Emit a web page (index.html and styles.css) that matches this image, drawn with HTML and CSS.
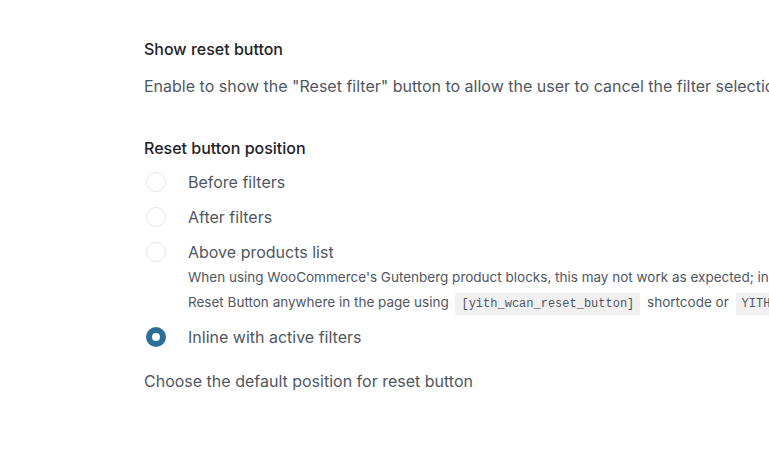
FILE: index.html
```html
<!DOCTYPE html>
<html lang="en">
<head>
  <meta charset="UTF-8" />
  <meta name="viewport" content="width=device-width, initial-scale=1.0"/>
  <title>Reset button options</title>
  <link rel="stylesheet" href="styles.css">
</head>
<body>
  <main class="options">
    <h2 class="field-title">Show reset button</h2>
    <p class="field-desc">Enable to show the "Reset filter" button to allow the user to cancel the filter selection in one click.</p>

    <h2 class="field-title second">Reset button position</h2>
    <ul class="radio-list">
      <li class="radio-row">
        <span class="radio"></span>
        <span class="radio-label">Before filters</span>
      </li>
      <li class="radio-row">
        <span class="radio"></span>
        <span class="radio-label">After filters</span>
      </li>
      <li class="radio-row has-note">
        <span class="radio"></span>
        <span class="radio-label">Above products list</span>
        <p class="radio-note">
          <span class="note-line">When using WooCommerce's Gutenberg product blocks, this may not work as expected; in this case you can place the</span>
          <span class="note-line">Reset Button anywhere in the page using <code>[yith_wcan_reset_button]</code> shortcode or <code>YITH Reset Button</code> block</span>
        </p>
      </li>
      <li class="radio-row">
        <span class="radio checked"></span>
        <span class="radio-label">Inline with active filters</span>
      </li>
    </ul>
    <p class="field-desc last">Choose the default position for reset button</p>
  </main>
</body>
</html>
```

FILE: styles.css
```css
* {
  box-sizing: border-box;
}

body {
  margin: 0;
  padding: 39px 0 0 144px;
  background: #ffffff;
  font-family: Inter, "Noto Sans", sans-serif;
  color: #50575e;
  overflow: hidden;
}

.options {
  width: 1000px;
}

.field-title {
  margin: 0;
  font-size: 16px;
  line-height: 20px;
  font-weight: 500;
  color: #1d2327;
}

.field-title.second {
  margin-top: 42px;
}

.field-desc {
  margin: 17px 0 0;
  font-size: 16px;
  line-height: 20px;
  white-space: nowrap;
}

.field-desc.last {
  margin-top: 16px;
}

.radio-list {
  list-style: none;
  margin: 7px 0 0;
  padding: 0;
}

.radio-row {
  display: grid;
  grid-template-columns: 20px 1fr;
  column-gap: 22px;
  align-items: center;
  padding: 7px 0 8px 2px;
}

.radio-row.has-note {
  padding-bottom: 3px;
}

.radio {
  width: 20px;
  height: 20px;
  border-radius: 50%;
  border: 1px solid #e2e4e7;
  background: #ffffff;
}

.radio.checked {
  border: 6px solid #2c6e97;
}

.radio-label {
  font-size: 16px;
  line-height: 20px;
  color: #50575e;
}

.radio-note {
  grid-column: 2;
  margin: 3px 0 0;
  font-size: 13.5px;
  line-height: 25px;
  white-space: nowrap;
}

.note-line {
  display: block;
}

.radio-note code {
  font-family: "Liberation Mono", "DejaVu Sans Mono", monospace;
  font-size: 12px;
  background: #f0f0f1;
  padding: 4px 6px;
  margin: 0 3px;
}
```
